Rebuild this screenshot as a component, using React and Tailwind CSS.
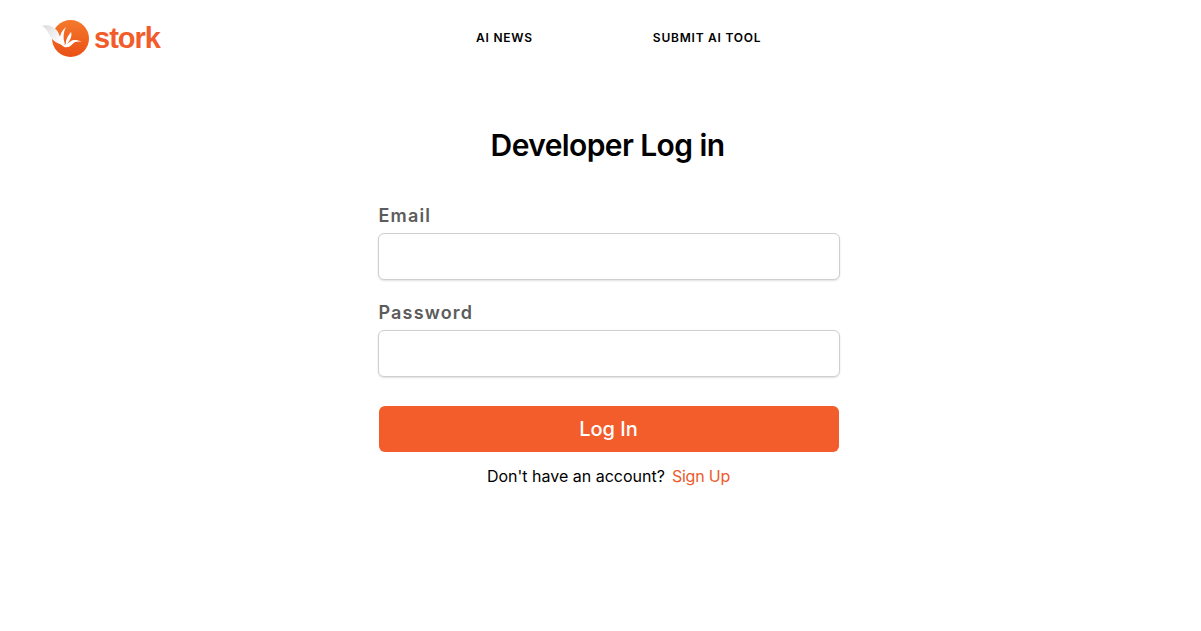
function Logo() {
  return (
    <div className="flex items-center">
      <svg width="48" height="40" viewBox="0 0 48 40" className="shrink-0">
        <defs>
          <linearGradient id="disc" x1="0" y1="0" x2="0" y2="1">
            <stop offset="0" stopColor="#f47a2c" />
            <stop offset="1" stopColor="#ea4f16" />
          </linearGradient>
          <linearGradient id="wing" x1="0" y1="0" x2="1" y2="0.6">
            <stop offset="0" stopColor="#d9d9d9" />
            <stop offset="1" stopColor="#ffffff" />
          </linearGradient>
        </defs>
        <circle cx="28.5" cy="20.5" r="18.5" fill="url(#disc)" />
        <path d="M0 8 C6 6 13 9 16 14 C18 18 19 22 22 27 C15 26 10 22 8 18 C6 14 4 10 0 8Z" fill="url(#wing)" />
        <path d="M24 9 C19 13 16 20 19 27 L23 26 C21 21 21 15 24 9Z" fill="#fff" />
        <path d="M29 14 C30.5 18 28 23 24 27 C23 22 26 18 29 14Z" fill="#fff" />
        <path d="M19 26 C24 28 27 24 30 22.5 C33 21.5 36 22.5 40 23.5 C36 23.5 33 23.5 31 25.5 C28 30 22 31 19 26Z" fill="#fff" />
      </svg>
      <span className="ml-[4px] mt-[1px] text-[29px] leading-none font-bold tracking-[-1px] text-[#f25c2b] font-['Liberation_Sans',sans-serif]">stork</span>
    </div>
  )
}

export default function App() {
  return (
    <div className="min-h-[631px] bg-white font-['Inter',sans-serif] text-black">
      <header className="h-[75px] pl-[42px] flex items-center">
        <div className="w-[434px] shrink-0"><Logo /></div>
        <nav className="flex gap-[120px] text-xs font-semibold tracking-[0.77px] leading-none">
          <a>AI NEWS</a>
          <a>SUBMIT AI TOOL</a>
        </nav>
      </header>

      <main className="flex flex-col items-center">
        <h1 className="mt-[51px] ml-[14px] text-[30px] leading-[38px] font-semibold tracking-[-0.6px]">Developer Log in</h1>

        <form className="mt-[40px] w-[462px] ml-[16px] flex flex-col">
          <label className="pl-px text-lg leading-[24px] font-semibold tracking-[1.15px] text-[#5c5c5c]">Email</label>
          <input type="email" className="mt-[5px] h-[47px] rounded-md border border-[#cfcfcf] bg-white shadow-[0_1px_2px_rgba(0,0,0,0.12)]" />
          <label className="mt-[21px] pl-px text-lg leading-[24px] font-semibold tracking-[1.15px] text-[#5c5c5c]">Password</label>
          <input type="password" className="mt-[5px] h-[47px] rounded-md border border-[#cfcfcf] bg-white shadow-[0_1px_2px_rgba(0,0,0,0.12)]" />
          <button type="button" className="mt-[29px] mx-px h-[46px] rounded-md bg-[#f35c2b] text-white text-xl font-medium">Log In</button>
          <p className="mt-[14px] text-base leading-[20px] text-center">
            Don't have an account?<a className="ml-[7px] tracking-[-0.2px] text-[#ed5a2b]">Sign Up</a>
          </p>
        </form>
      </main>
    </div>
  )
}
